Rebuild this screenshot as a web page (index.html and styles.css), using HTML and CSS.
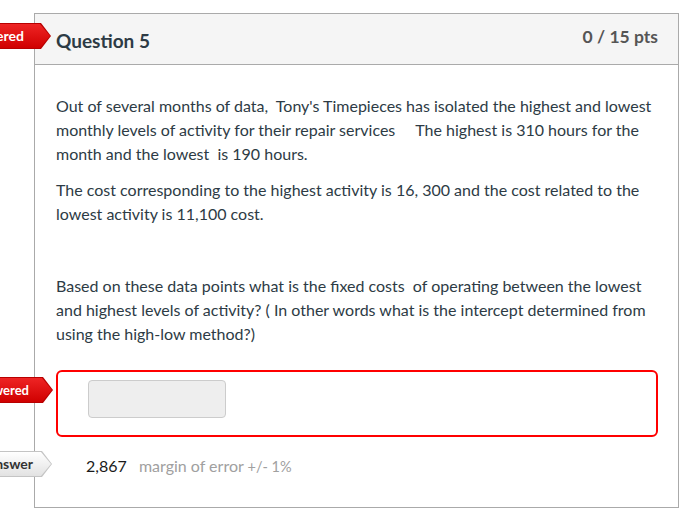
FILE: index.html
```html
<!DOCTYPE html>
<html>
<head>
<meta charset="utf-8">
<link rel="stylesheet" href="styles.css">
</head>
<body>
<div class="page">
  <div class="card">
    <div class="tag tag-red tag-top">Unanswered</div>
    <div class="card-header">
      <h2 class="q-title">Question 5</h2>
      <div class="q-points">0 / 15 pts</div>
    </div>
    <div class="card-body">
      <p>Out of several months of data,&nbsp; Tony's Timepieces has isolated the highest and lowest monthly levels of activity for their repair services &nbsp;&nbsp;&nbsp; The highest is 310 hours for the month and the lowest&nbsp; is 190 hours.</p>
      <p>The cost corresponding to the highest activity is 16, 300 and the cost related to the lowest activity is 11,100 cost.</p>
      <p>&nbsp;</p>
      <p>Based on these data points what is the fixed costs&nbsp; of operating between the lowest and highest levels of activity? ( In other words what is the intercept determined from using the high-low method?)</p>
      <div class="answer-box">
        <div class="tag tag-red tag-answer">Unanswered</div>
        <div class="answer-input"></div>
      </div>
      <div class="correct-row">
        <div class="tag tag-grey tag-correct">Correct Answer</div>
        <span class="correct-value">2,867</span>
        <span class="margin-text">margin of error <span class="margin-small">+/- 1%</span></span>
      </div>
    </div>
  </div>
</div>
</body>
</html>
```

FILE: styles.css
```css
html, body {
  margin: 0;
  padding: 0;
  background: #fff;
}
body {
  font-family: Lato, "Open Sans", "Liberation Sans", sans-serif;
  color: #2d3b45;
  overflow: hidden;
}
.page {
  padding: 13px 18px 0 34px;
}
.card {
  position: relative;
  border: 1px solid #aaaaaa;
}
.card-header {
  display: flex;
  justify-content: space-between;
  align-items: flex-start;
  height: 50px;
  background: #f5f5f5;
  border-bottom: 1px solid #aaaaaa;
  padding: 0 20px 0 21px;
}
.q-title {
  margin: 0;
  padding-top: 16px;
  font-size: 19px;
  font-weight: 700;
  line-height: 22px;
  color: #2d3b45;
}
.q-points {
  padding-top: 13px;
  font-size: 17.5px;
  font-weight: 700;
  line-height: 20px;
  color: #555555;
}
.card-body {
  padding: 29px 20px 25px 21px;
  font-size: 16px;
  line-height: 24px;
}
.card-body p {
  margin: 0 0 12px 0;
}
.answer-box {
  position: relative;
  margin-top: 24px;
  border: 2px solid #ff0000;
  border-radius: 6px;
  padding: 8px 30px 17px 30px;
}
.answer-input {
  width: 136px;
  height: 36px;
  background: #eeeeee;
  border: 1px solid #cccccc;
  border-radius: 4px;
}
.correct-row {
  position: relative;
  margin-top: 14px;
  padding-left: 30px;
  line-height: 30px;
  font-size: 16px;
}
.correct-value {
  color: #1a1a1a;
  margin-right: 8px;
}
.margin-text {
  color: #a0a0a0;
  font-size: 16px;
}
.margin-small {
  font-size: 14.5px;
}
.tag {
  position: absolute;
  height: 26px;
  line-height: 26px;
  font-size: 14px;
  font-weight: 700;
  white-space: nowrap;
  padding: 0 27px 0 20px;
  clip-path: polygon(0 0, calc(100% - 10px) 0, 100% 50%, calc(100% - 10px) 100%, 0 100%);
  z-index: 2;
}
.tag::before {
  content: "";
  position: absolute;
  inset: 1px;
  clip-path: polygon(0 0, calc(100% - 10px) 0, 100% 50%, calc(100% - 10px) 100%, 0 100%);
  z-index: -1;
}
.tag-red {
  color: #ffffff;
  background: #b80000;
}
.tag-red::before {
  background: linear-gradient(#ee2424, #d00000);
}
.tag-grey {
  color: #333333;
  background: #c4c4c4;
  padding-right: 19px;
}
.tag-grey::before {
  background: linear-gradient(#ffffff, #e2e2e2);
}
.tag-top {
  top: 9px;
  right: calc(100% - 16px);
}
.tag-answer {
  top: 5px;
  right: calc(100% + 5px);
  padding-right: 24px;
  font-size: 13px;
}
.tag-correct {
  top: 0;
  right: calc(100% + 4px);
  height: 26px;
  line-height: 26px;
}
```
